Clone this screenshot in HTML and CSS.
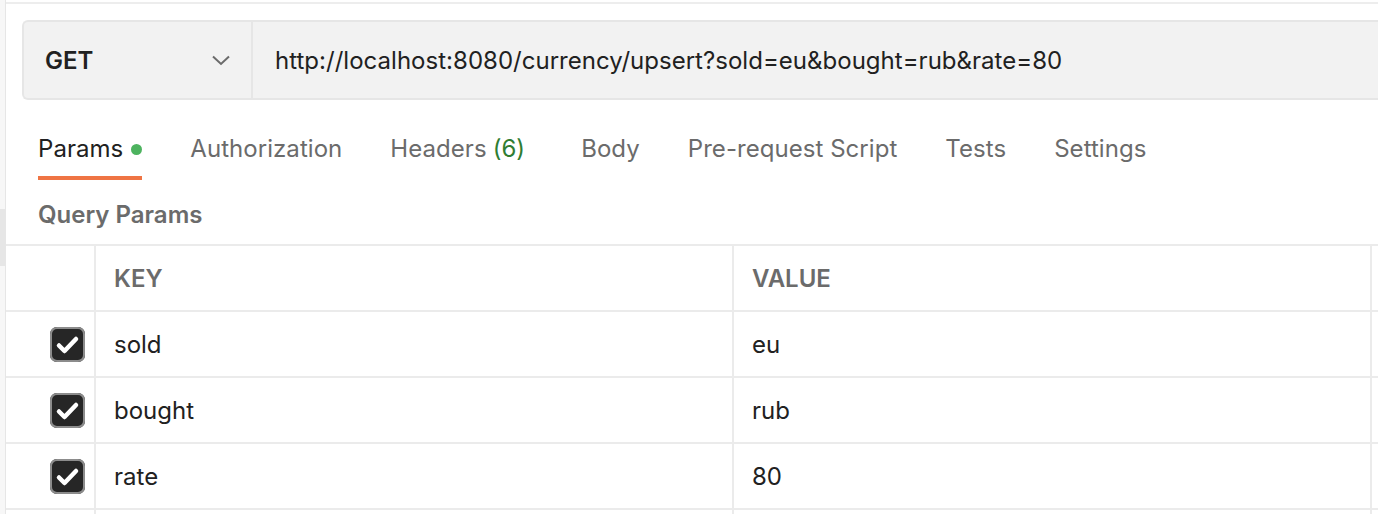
FILE: index.html
```html
<!DOCTYPE html>
<html lang="en">
<head>
<meta charset="utf-8">
<title>Request</title>
<link rel="stylesheet" href="styles.css">
</head>
<body>
<div class="app">
  <div class="edge"><div class="edge-handle"></div></div>
  <div class="main">
    <div class="urlbar">
      <div class="method">
        <span class="method-name">GET</span>
        <svg class="chev" width="18" height="11" viewBox="0 0 18 11"><path d="M1 1.5 L9 9 L17 1.5" fill="none" stroke="#6b6b6b" stroke-width="2"/></svg>
      </div>
      <div class="url">http://localhost:8080/currency/upsert?sold=eu&amp;bought=rub&amp;rate=80</div>
    </div>
    <div class="tabs">
      <div class="tab active">Params<span class="dot"></span></div>
      <div class="tab">Authorization</div>
      <div class="tab tab-headers">Headers <span class="count">(6)</span></div>
      <div class="tab">Body</div>
      <div class="tab">Pre-request Script</div>
      <div class="tab">Tests</div>
      <div class="tab">Settings</div>
    </div>
    <div class="section-title">Query Params</div>
    <div class="table">
      <div class="row head">
        <div class="cell check"></div>
        <div class="cell key">KEY</div>
        <div class="cell val">VALUE</div>
        <div class="cell rest"></div>
      </div>
      <div class="row">
        <div class="cell check"><span class="cb"><svg width="35" height="35" viewBox="0 0 35 35"><path d="M9 18.5 L14.5 24 L26 12" fill="none" stroke="#fff" stroke-width="4.5" stroke-linecap="round" stroke-linejoin="round"/></svg></span></div>
        <div class="cell key">sold</div>
        <div class="cell val">eu</div>
        <div class="cell rest"></div>
      </div>
      <div class="row">
        <div class="cell check"><span class="cb"><svg width="35" height="35" viewBox="0 0 35 35"><path d="M9 18.5 L14.5 24 L26 12" fill="none" stroke="#fff" stroke-width="4.5" stroke-linecap="round" stroke-linejoin="round"/></svg></span></div>
        <div class="cell key">bought</div>
        <div class="cell val">rub</div>
        <div class="cell rest"></div>
      </div>
      <div class="row">
        <div class="cell check"><span class="cb"><svg width="35" height="35" viewBox="0 0 35 35"><path d="M9 18.5 L14.5 24 L26 12" fill="none" stroke="#fff" stroke-width="4.5" stroke-linecap="round" stroke-linejoin="round"/></svg></span></div>
        <div class="cell key">rate</div>
        <div class="cell val">80</div>
        <div class="cell rest"></div>
      </div>
      <div class="row">
        <div class="cell check"><span class="cb"><svg width="35" height="35" viewBox="0 0 35 35"><path d="M9 18.5 L14.5 24 L26 12" fill="none" stroke="#fff" stroke-width="4.5" stroke-linecap="round" stroke-linejoin="round"/></svg></span></div>
        <div class="cell key"></div>
        <div class="cell val"></div>
        <div class="cell rest"></div>
      </div>
    </div>
  </div>
</div>
</body>
</html>
```
FILE: styles.css
```css
* { box-sizing: border-box; }
html, body { margin: 0; padding: 0; background: #fff; }
body {
  font-family: Inter, "Noto Sans", sans-serif;
  font-size: 24px;
  color: #212121;
  width: 1378px;
  height: 514px;
  overflow: hidden;
}
.app { display: flex; height: 514px; }
.edge {
  width: 6px;
  flex: none;
  background: #f7f7f7;
  border-right: 1px solid #e6e6e6;
}
.edge-handle {
  margin-top: 209px;
  height: 57px;
  background: #e6e6e6;
}
.main {
  flex: 1;
  min-width: 0;
  margin-top: 2px;
  border-top: 2px solid #ededed;
  overflow: hidden;
}
.urlbar {
  display: flex;
  height: 80px;
  margin: 16px -40px 0 16px;
  background: #f2f2f2;
  border: 2px solid #e6e6e6;
  border-right: none;
  border-radius: 6px 0 0 6px;
}
.method {
  width: 229px;
  flex: none;
  display: flex;
  align-items: center;
  justify-content: space-between;
  padding: 1px 21px 0 21px;
  border-right: 2px solid #e6e6e6;
}
.method-name { font-weight: 600; color: #212121; }
.chev { display: block; }
.url {
  display: flex;
  align-items: center;
  padding: 1px 0 0 22px;
  white-space: nowrap;
  color: #212121;
  letter-spacing: 0.02px;
}
.tabs {
  display: flex;
  gap: 48px;
  padding-left: 32px;
  height: 80px;
}
.tab {
  padding: 34px 0 13px;
  line-height: 29px;
  color: #6b6b6b;
  border-bottom: 4px solid transparent;
  white-space: nowrap;
  display: flex;
  align-items: center;
  letter-spacing: 0.05px;
}
.tab.active {
  color: #212121;
  border-bottom-color: #ef7444;
}
.tab-headers { margin-right: 8px; }
.count { color: #2f7d32; margin-left: 6px; }
.dot {
  width: 11px;
  height: 11px;
  border-radius: 50%;
  background: #4db35f;
  margin-left: 8px;
  margin-top: 2px;
}
.section-title {
  height: 64px;
  display: flex;
  align-items: center;
  padding: 4px 0 0 32px;
  font-weight: 600;
  color: #6b6b6b;
}
.table {
  border-top: 2px solid #ebebeb;
}
.row {
  display: flex;
  height: 66px;
  border-bottom: 2px solid #ebebeb;
}
.cell {
  flex: none;
  display: flex;
  align-items: center;
  padding-left: 18px;
  border-right: 2px solid #ebebeb;
  white-space: nowrap;
}
.cell.check {
  width: 90px;
  padding-left: 44px;
}
.cell.key { width: 638px; }
.cell.val { width: 638px; }
.cell.rest { flex: 1 1 auto; padding-left: 0; border-right: none; }
.head .cell { font-weight: 600; color: #6b6b6b; }
.cb {
  width: 35px;
  height: 35px;
  border-radius: 7px;
  background: #262626;
  box-shadow: inset 0 0 0 2px #8c8c8c;
  display: block;
}
.cb svg { display: block; }
```
